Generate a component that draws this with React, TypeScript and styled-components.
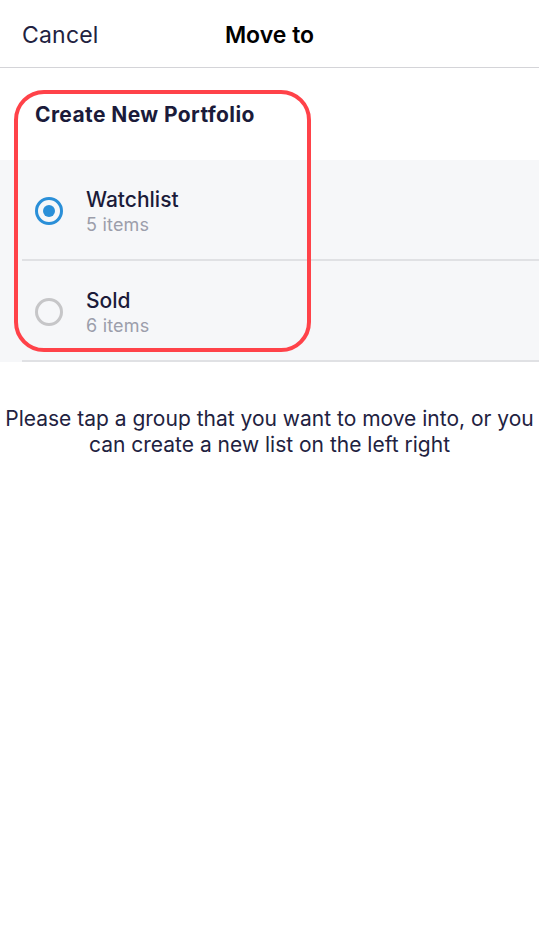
import styled, { createGlobalStyle } from 'styled-components';

const GlobalStyle = createGlobalStyle`
  html, body {
    margin: 0;
    padding: 0;
    background: #ffffff;
  }
  body {
    font-family: Inter, "Noto Sans", "Liberation Sans", sans-serif;
    -webkit-font-smoothing: antialiased;
  }
`;

const Screen = styled.div`
  width: 539px;
  min-height: 933px;
  background: #ffffff;
  color: #1c1c3a;
`;

const Header = styled.header`
  height: 67px;
  display: grid;
  grid-template-columns: 1fr auto 1fr;
  align-items: center;
  border-bottom: 1px solid #d4d4d8;
  padding: 0 22px;
`;

const CancelButton = styled.button`
  justify-self: start;
  background: none;
  border: 0;
  padding: 0;
  margin-top: 2px;
  font-family: inherit;
  font-size: 23px;
  font-weight: 400;
  letter-spacing: 0.2px;
  color: #22223f;
  cursor: pointer;
`;

const Title = styled.h1`
  margin: 2px 0 0;
  font-size: 23px;
  font-weight: 600;
  color: #000000;
`;

const Body = styled.section`
  position: relative;
`;

const SectionTitle = styled.h2`
  margin: 0;
  padding: 34px 35px 0;
  height: 92px;
  box-sizing: border-box;
  font-size: 21px;
  font-weight: 700;
  letter-spacing: 0.4px;
  color: #1b1b3a;
`;

const List = styled.ul`
  list-style: none;
  margin: 0;
  padding: 0;
  background: #f6f7f9;
`;

const Row = styled.li`
  height: 101px;
  display: flex;
  align-items: center;
  padding-left: 35px;
  position: relative;
  &::after {
    content: '';
    position: absolute;
    left: 22px;
    right: 0;
    bottom: 0;
    height: 2px;
    background: #e0e1e4;
  }
`;

const Radio = styled.span<{ $checked: boolean }>`
  width: 28px;
  height: 28px;
  box-sizing: border-box;
  border-radius: 50%;
  border: 3px solid ${p => (p.$checked ? '#2a8fd8' : '#c6c6c8')};
  display: flex;
  align-items: center;
  justify-content: center;
  margin-right: 23px;
  flex-shrink: 0;
  &::before {
    content: '';
    width: 12px;
    height: 12px;
    border-radius: 50%;
    background: ${p => (p.$checked ? '#2a8fd8' : 'transparent')};
  }
`;

const RowText = styled.div`
  display: flex;
  flex-direction: column;
  gap: 2px;
`;

const RowName = styled.span`
  font-size: 21px;
  font-weight: 500;
  color: #1b1b3a;
`;

const RowCount = styled.span`
  font-size: 18px;
  letter-spacing: 0.2px;
  color: #9c9eab;
`;

const Highlight = styled.div`
  position: absolute;
  left: 14px;
  top: 22px;
  width: 297px;
  height: 262px;
  box-sizing: border-box;
  border: 4px solid #ff4249;
  border-radius: 30px;
  pointer-events: none;
`;

const Hint = styled.p`
  margin: 0;
  padding: 44px 4px 0;
  text-align: center;
  font-size: 21px;
  line-height: 26px;
  color: #22223f;
`;

const groups = [
  { name: 'Watchlist', count: 5, checked: true },
  { name: 'Sold', count: 6, checked: false },
];

const App = () => {
  return (
    <Screen>
      <GlobalStyle />
      <Header>
        <CancelButton type="button">Cancel</CancelButton>
        <Title>Move to</Title>
      </Header>
      <Body>
        <SectionTitle>Create New Portfolio</SectionTitle>
        <List>
          {groups.map(g => (
            <Row key={g.name}>
              <Radio $checked={g.checked} />
              <RowText>
                <RowName>{g.name}</RowName>
                <RowCount>{g.count} items</RowCount>
              </RowText>
            </Row>
          ))}
        </List>
        <Highlight />
      </Body>
      <Hint>
        Please tap a group that you want to move into, or you can create a new list on the left right
      </Hint>
    </Screen>
  );
};

export default App;
